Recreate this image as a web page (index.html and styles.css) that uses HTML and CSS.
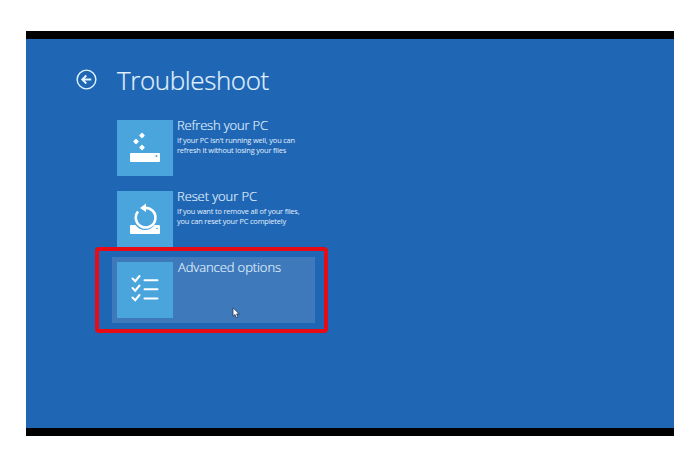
FILE: index.html
```html
<!DOCTYPE html>
<html lang="en">
<head>
<meta charset="utf-8">
<title>Troubleshoot</title>
<link rel="stylesheet" href="styles.css">
</head>
<body>
<main class="screen">
  <header class="header">
    <svg class="back" viewBox="0 0 22 22" aria-label="Back"><circle cx="11" cy="11" r="9.8"/><path d="M16 11H7M10.800 6.800L6.600 11l4.200 4.200"/></svg>
    <h1 class="title">Troubleshoot</h1>
  </header>
  <section class="options">
    <article class="option">
      <svg class="tile" viewBox="0 0 56 56"><path class="solid spark" d="M25 13.500l2 2-2 2-2-2zM19 19.500l2 2-2 2-2-2zM25 25.500l2 2-2 2-2-2z"/><rect class="solid" x="13" y="33" width="30" height="9" rx="1"/><circle class="light" cx="39.500" cy="36" r="1"/></svg>
      <div class="copy"><h2 class="name refresh">Refresh your PC</h2><p class="desc">If your PC isn't running well, you can</p><p class="desc">refresh it without losing your files</p></div>
    </article>
    <article class="option">
      <svg class="tile" viewBox="0 0 56 56"><path class="solid" d="M14 34h4.500q3.500 5 9.500 5t9.500-5H42q1 0 1 1v7q0 1-1 1H14q-1 0-1-1v-7q0-1 1-1z"/><path class="ring" d="M21 20.500A9.800 9.800 0 1 0 27 17"/><path class="solid" d="M23 17l6-4.500v8.500z"/><circle class="light" cx="40" cy="37.500" r=".8"/></svg>
      <div class="copy"><h2 class="name">Reset your PC</h2><p class="desc">If you want to remove all of your files,</p><p class="desc">you can reset your PC completely</p></div>
    </article>
    <article class="option selected">
      <svg class="tile" viewBox="0 0 56 56"><path class="checks" d="M15.500 16.500l2.700 2.700 4.300-5.200M15.500 26l2.700 2.700 4.300-5.200M15.500 35.500l2.700 2.700 4.300-5.200M27.500 18.200h13M27.500 27.200h13M27.500 36.400h13"/></svg>
      <div class="copy"><h2 class="name advanced">Advanced options</h2></div>
      <div class="marker"></div>
      <svg class="cursor" viewBox="0 0 8 12"><path d="M1 .8v8.400l2-1.700 1.300 3 1.600-.7-1.300-2.900h2.600z"/></svg>
    </article>
  </section>
</main>
</body>
</html>
```
FILE: styles.css
```css
* { box-sizing: border-box; }
body { margin: 0; background: #fff; font-family: "Open Sans", "Noto Sans", sans-serif; color: #e1f1ff; }
.screen { width: 648px; height: 405px; margin: 31px 0 0 26px; border: solid #000; border-width: 8px 0; background: #1f67b4; }
.header { display: flex; align-items: center; height: 81px; padding-left: 50px; gap: 20px; }
.back { width: 21px; height: 21px; fill: none; stroke: #e1f5ff; stroke-width: 1.5; }
.back path { stroke-width: 2; }
.title { margin: 0; font-size: 26px; line-height: 36px; font-weight: 300; letter-spacing: -.4px; -webkit-text-stroke: .2px #e1f1ff; }
.options { width: 203px; margin-left: 86px; display: grid; grid-template-rows: 71px 66px 66px; }
.option { display: flex; gap: 4px; padding-left: 5px; }
.selected { position: relative; padding-top: 5px; background: #3e7abb; }
.tile { flex: none; width: 56px; height: 56px; background: #4aa5dc; }
.solid { fill: #fff; }
.spark { stroke: #fff; stroke-width: 1.4; stroke-linejoin: round; }
.light { fill: #4aa5dc; }
.ring, .checks { fill: none; stroke: #fff; stroke-width: 2.6; }
.checks { stroke-width: 2; stroke-linecap: round; }
.copy { white-space: nowrap; }
.name { margin: -4px 0 1px; font-size: 13px; line-height: 18px; font-weight: 300; letter-spacing: -.1px; -webkit-text-stroke: .15px #e1f1ff; }
.refresh { letter-spacing: -.17px; }
.advanced { margin-left: 1px; }
.desc { margin: 0; font-size: 7.4px; line-height: 10px; letter-spacing: -.17px; }
.marker { position: absolute; left: -17px; top: -10px; width: 233px; height: 86px; border: 4px solid #e60b14; border-radius: 4px; }
.cursor { position: absolute; left: 120px; top: 50px; width: 8px; height: 12px; fill: #fff; stroke: #26384e; stroke-width: .8; }
```
